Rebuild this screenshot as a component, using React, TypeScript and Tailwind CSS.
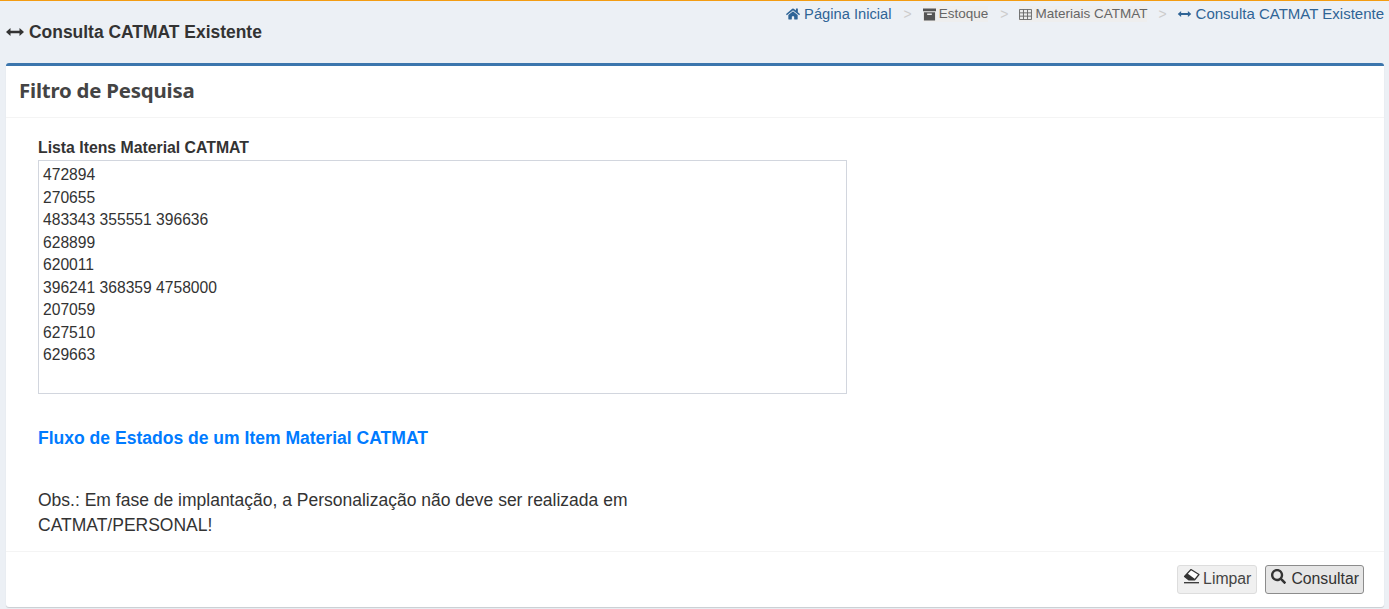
import { FaHome, FaSearch } from 'react-icons/fa';

const ITEMS = `472894
270655
483343 355551 396636
628899
620011
396241 368359 4758000
207059
627510
629663`;

function ArrowsH({ className }: { className?: string }) {
  return (
    <svg viewBox="0 0 18 8" className={className} fill="currentColor">
      <path d="M0 4 4.500 0v2.800h9V0L18 4l-4.500 4V5.200h-9V8z" />
    </svg>
  );
}

function BoxIcon({ className }: { className?: string }) {
  return (
    <svg viewBox="0 0 14 13" className={className} fill="currentColor">
      <path d="M0 0h14v3H0zM1 4h12v9H1zm3.500 1.500v1.500h5V5.500z" fillRule="evenodd" />
    </svg>
  );
}

function GridIcon({ className }: { className?: string }) {
  return (
    <svg viewBox="0 0 14 12" className={className} fill="none" stroke="currentColor" strokeWidth="1">
      <path d="M.5.5h13v11H.5zM.5 4.200h13M.5 7.800h13M4.800.5v11M9.200.5v11" />
    </svg>
  );
}

function EraserIcon({ className }: { className?: string }) {
  return (
    <svg viewBox="0 0 18 16" className={className}>
      <path d="M1.500 8.500 8 1.500l8 5-4.500 5.500H6z" fill="#fff" stroke="#333" strokeWidth="1.200" strokeLinejoin="round" />
      <path d="M1.500 8.500 4.500 5.500l7.500 5.500-.8 1H6z" fill="#333" />
      <path d="M1 14.700h15" stroke="#333" strokeWidth="1.300" />
    </svg>
  );
}

export default function App() {
  return (
    <div className="h-[609px] overflow-hidden border-t border-[#f39c12] bg-[#ecf0f5] font-['Liberation_Sans',Arial,sans-serif] text-[#333]">
      <div className="flex h-[62px] justify-between pl-[6px] pr-[5px]">
        <h1 className="mt-[21px] flex h-5 items-center gap-[5px] text-[17.45px] font-bold leading-5 text-[#333]">
          <ArrowsH className="h-[8px] w-[18px] text-[#333]" />
          Consulta CATMAT Existente
        </h1>
        <nav className="mt-[5px] flex h-4 items-center text-[15px] leading-4">
          <a className="flex items-center gap-[4px] text-[14.7px] text-[#2f6496]">
            <FaHome className="h-[14px] w-[14px]" />
            Página Inicial
          </a>
          <span className="ml-[12px] mr-[11px] text-[14px] text-[#ccc]">&gt;</span>
          <span className="flex items-center gap-[3px] bg-[#eeeeee] text-[13.5px] text-[#666]">
            <BoxIcon className="h-[13px] w-[13px] text-[#555]" />
            Estoque
          </span>
          <span className="ml-[12px] mr-[11px] text-[14px] text-[#ccc]">&gt;</span>
          <span className="flex items-center gap-[3px] bg-[#eeeeee] text-[13.5px] text-[#666]">
            <GridIcon className="h-[11px] w-[13px]" />
            Materiais CATMAT
          </span>
          <span className="ml-[11px] mr-[10px] text-[14px] text-[#ccc]">&gt;</span>
          <a className="flex items-center gap-[4px] text-[#2f6496]">
            <ArrowsH className="h-[6px] w-[15px]" />
            Consulta CATMAT Existente
          </a>
        </nav>
      </div>

      <div className="mx-[5px] ml-[6px] h-[544px] rounded-[3px] border-t-[3px] border-[#3c76ad] bg-white shadow-[0_1px_1px_rgba(0,0,0,0.15)]">
        <div className="flex h-[52px] items-center border-b border-[#f4f4f4] pb-[2px] pl-[13px]">
          <h3 className="font-['Noto_Sans',sans-serif] text-[20.4px] font-bold leading-none tracking-[-0.2px] text-[#444]">Filtro de Pesquisa</h3>
        </div>
        <div className="h-[434px] border-b border-[#f4f4f4] pl-[32px] pt-[20px]">
          <label className="block text-[15.8px] font-bold leading-[19px] text-[#333]">Lista Itens Material CATMAT</label>
          <textarea
            readOnly
            value={ITEMS}
            className="mt-[3px] block h-[234px] w-[809px] resize-none border border-[#d2d6de] px-[4px] pb-[2px] pt-[3px] text-[15.65px] leading-[22.5px] text-[#333] outline-none"
          />
          <a className="mt-[34px] block text-[17.55px] font-bold leading-5 text-[#007bff]">Fluxo de Estados de um Item Material CATMAT</a>
          <p className="mt-[40px] w-[640px] text-[17.5px] leading-[25px] text-[#333]">
            Obs.: Em fase de implantação, a Personalização não deve ser realizada em CATMAT/PERSONAL!
          </p>
        </div>
        <div className="flex justify-end gap-2 pr-[20px] pt-[13px]">
          <button className="flex h-[29px] items-center gap-[2px] rounded-[3px] border border-[#ddd] bg-[#f0f0f0] pb-[1px] pl-[5px] pr-[5px] text-[15.8px] text-[#444]">
            <EraserIcon className="mb-[6px] h-[16px] w-[18px]" />
            Limpar
          </button>
          <button className="flex h-[29px] items-center gap-[5px] rounded-[3px] border border-[#8c8c8c] bg-[#e6e6e6] pb-[1px] pl-[5px] pr-[4px] text-[15.8px] text-[#333]">
            <FaSearch className="mb-[5px] h-[15px] w-[15px]" />
            Consultar
          </button>
        </div>
      </div>
    </div>
  );
}
